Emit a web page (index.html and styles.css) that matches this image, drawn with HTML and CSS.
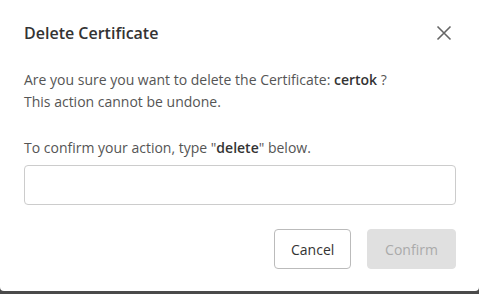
FILE: index.html
```html
<!DOCTYPE html>
<html lang="en">
<head>
    <meta charset="UTF-8">
    <meta name="viewport" content="width=device-width, initial-scale=1.0">
    <title>Delete Certificate</title>
    <link rel="stylesheet" href="styles.css">
</head>
<body>
    <div class="modal">
        <div class="modal-header">
            <h2>Delete Certificate</h2>
            <button class="close" aria-label="Close">
                <svg width="16" height="16" viewBox="0 0 16 16">
                    <path d="M1.5 1.5 L14.5 14.5 M14.5 1.5 L1.5 14.5" stroke="#666" stroke-width="1.6" fill="none"/>
                </svg>
            </button>
        </div>

        <div class="modal-body">
            <p class="warning">Are you sure you want to delete the Certificate: <b>certok</b> ?<br>This action cannot be undone.</p>
            <p class="hint">To confirm your action, type "<b>delete</b>" below.</p>
            <input class="confirm-input" type="text">
        </div>

        <div class="modal-footer">
            <button class="btn btn-cancel">Cancel</button>
            <button class="btn btn-confirm" disabled>Confirm</button>
        </div>
    </div>
</body>
</html>
```

FILE: styles.css
```css
body {
    margin: 0;
    background-color: #4a4a4a;
    font-family: 'Open Sans', 'Liberation Sans', sans-serif;
    color: #555;
}

.modal {
    width: 479px;
    height: 291px;
    box-sizing: border-box;
    background-color: #fff;
    border-radius: 0 0 4px 4px;
    padding: 0 23px 0 24px;
}

.modal-header {
    display: flex;
    justify-content: space-between;
    align-items: center;
    height: 66px;
}

.modal-header h2 {
    margin: 0;
    font-size: 16px;
    font-weight: 600;
    color: #333;
}

.close {
    border: none;
    background: none;
    padding: 0;
    margin-right: 4px;
    display: flex;
}

.warning {
    margin: 3px 0 0;
    font-size: 14px;
    line-height: 22px;
}

.hint {
    margin: 24px 0 0;
    font-size: 14px;
    line-height: 22px;
}

.modal-body b {
    font-weight: 600;
    color: #333;
}

.confirm-input {
    display: block;
    width: 100%;
    height: 40px;
    box-sizing: border-box;
    margin-top: 6px;
    border: 1px solid #ccc;
    border-radius: 4px;
    font-family: inherit;
    font-size: 14px;
    padding: 0 12px;
}

.modal-footer {
    display: flex;
    justify-content: flex-end;
    gap: 16px;
    margin-top: 24px;
}

.btn {
    height: 40px;
    border-radius: 4px;
    font-family: inherit;
    font-size: 14px;
    font-weight: 400;
    padding: 0 16px;
}

.btn-cancel {
    width: 77px;
    background-color: #fff;
    border: 1px solid #bbb;
    color: #333;
}

.btn-confirm {
    width: 89px;
    background-color: #e0e0e0;
    border: 1px solid #e0e0e0;
    color: #aaa;
}
```
